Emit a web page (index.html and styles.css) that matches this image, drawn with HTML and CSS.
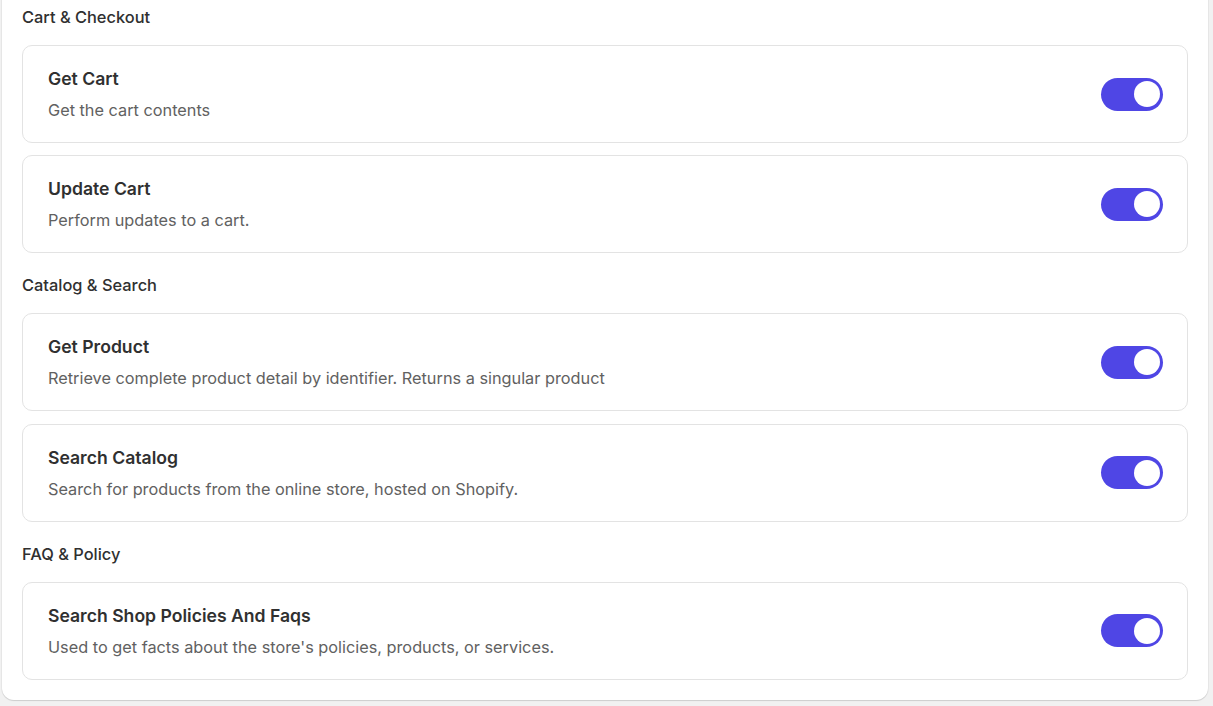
FILE: index.html
```html
<!DOCTYPE html>
<html lang="en">
<head>
<meta charset="utf-8">
<title>Tools</title>
<link rel="stylesheet" href="styles.css">
</head>
<body>
<div class="page">
  <div class="card">
    <section class="group">
      <h2 class="group-title">Cart &amp; Checkout</h2>
      <div class="items">
        <div class="item">
          <div class="item-text">
            <div class="item-title">Get Cart</div>
            <div class="item-desc">Get the cart contents</div>
          </div>
          <span class="toggle"><span class="knob"></span></span>
        </div>
        <div class="item">
          <div class="item-text">
            <div class="item-title">Update Cart</div>
            <div class="item-desc">Perform updates to a cart.</div>
          </div>
          <span class="toggle"><span class="knob"></span></span>
        </div>
      </div>
    </section>
    <section class="group">
      <h2 class="group-title">Catalog &amp; Search</h2>
      <div class="items">
        <div class="item">
          <div class="item-text">
            <div class="item-title">Get Product</div>
            <div class="item-desc">Retrieve complete product detail by identifier. Returns a singular product</div>
          </div>
          <span class="toggle"><span class="knob"></span></span>
        </div>
        <div class="item">
          <div class="item-text">
            <div class="item-title">Search Catalog</div>
            <div class="item-desc">Search for products from the online store, hosted on Shopify.</div>
          </div>
          <span class="toggle"><span class="knob"></span></span>
        </div>
      </div>
    </section>
    <section class="group">
      <h2 class="group-title">FAQ &amp; Policy</h2>
      <div class="items">
        <div class="item">
          <div class="item-text">
            <div class="item-title">Search Shop Policies And Faqs</div>
            <div class="item-desc">Used to get facts about the store's policies, products, or services.</div>
          </div>
          <span class="toggle"><span class="knob"></span></span>
        </div>
      </div>
    </section>
  </div>
</div>
</body>
</html>
```
FILE: styles.css
```css
html, body {
  margin: 0;
  padding: 0;
  background: #f1f1f1;
  height: 706px;
  overflow: hidden;
}
body {
  font-family: Inter, "Noto Sans", sans-serif;
  color: #303030;
}
.page {
  padding: 0 5px 0 2px;
}
.card {
  margin-top: -13px;
  background: #ffffff;
  border-radius: 12px;
  box-shadow: 0 1px 1px rgba(0,0,0,0.12), 0 0 0 1px rgba(0,0,0,0.03);
  padding: 20px;
  display: flex;
  flex-direction: column;
  gap: 22px;
}
.group-title {
  margin: 0 0 18px 0;
  font-size: 16.4px;
  line-height: 20px;
  font-weight: 500;
  color: #303030;
}
.items {
  display: flex;
  flex-direction: column;
  gap: 12.4px;
}
.item {
  border: 1px solid #e3e3e3;
  border-radius: 10px;
  padding: 22px 24px 22px 25px;
  display: flex;
  align-items: center;
  justify-content: space-between;
}
.item-title {
  font-size: 17.6px;
  line-height: 22px;
  font-weight: 600;
  color: #303030;
}
.item-desc {
  margin-top: 10px;
  font-size: 16.3px;
  line-height: 20px;
  color: #616161;
}
.toggle {
  width: 62px;
  height: 33px;
  border-radius: 17px;
  background: #4f46e5;
  display: flex;
  align-items: center;
  justify-content: flex-end;
  padding: 0 3px;
  box-sizing: border-box;
}
.knob {
  width: 26px;
  height: 26px;
  border-radius: 50%;
  background: #ffffff;
}
```
